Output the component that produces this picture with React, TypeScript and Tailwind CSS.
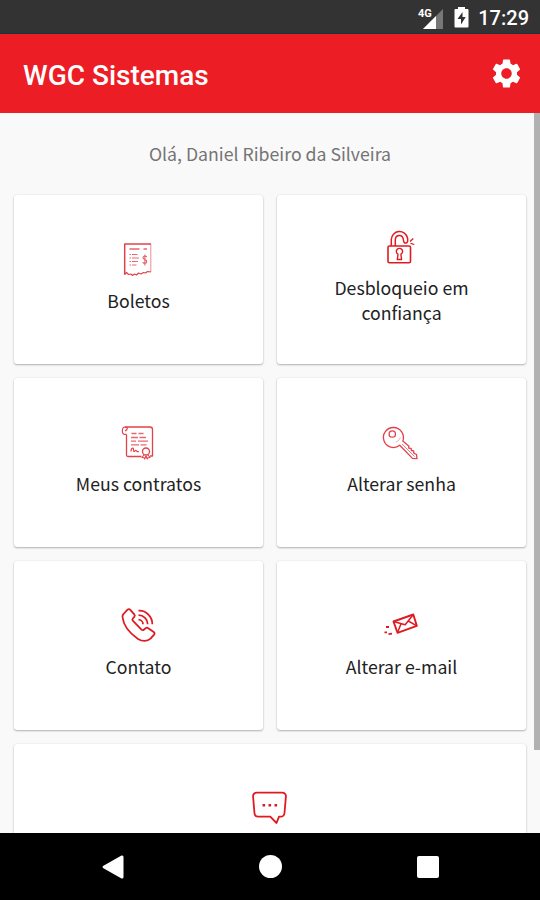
import type { ReactNode } from "react"
import { MdSettings } from "react-icons/md"

const Icon = ({ children, color = "text-[#e01a22]" }: { children: ReactNode, color?: string }) => (
  <svg
    width="36" height="36" viewBox="0.5 -0.5 36 36" fill="none" stroke="currentColor"
    strokeWidth="1.6" strokeLinejoin="round" className={`shrink-0 overflow-visible ${color}`}
  >
    {children}
  </svg>
)

const BillIcon = () => (
  <Icon color="text-[#e3414a]">
    <path d="M30.5 2.5H4.2V33" strokeWidth="1.5" />
    <path d="M30.3 2.5v28" strokeWidth="1" opacity=".6" />
    <path d="M4 33l2-2 2 2 2.5-.5 1.5 1.5 2-1.5 2 1 2-2 2.5 1 2.5-1.5 2 .5 2-1.5 3.5.5" strokeWidth="1.2" />
    <path d="M9 7.5h10M23 7.5h3.5" strokeWidth="1.3" opacity=".8" />
    <path d="M9 13h1.5M11.5 13h5.5M9 16.5h1.5M11.5 16.5h7M9 20h1.5M11.5 20h6M9 23.5h1.5M11.5 23.5h4.5" strokeWidth="1.2" opacity=".8" />
    <path d="M26.2 15.5c-.5-1.5-3.7-1.5-3.7.7s3.700 1.500 3.700 3.900-3.500 2.200-3.900.6M24.400 13v11" strokeWidth="1.1" opacity=".85" />
  </Icon>
)

const UnlockIcon = () => (
  <Icon>
    <rect x="4.5" y="17.5" width="22.5" height="16.7" rx="1.5" />
    <path d="M7.8 17.5V11a8.2 8.2 0 0 1 16.2-1.5c.5 2.5.2 4.5-1.3 5s-2.5-.7-2.7-2.5c-.3-3.500-1.500-5-4-5s-4.200 1.800-4.200 4.500v6" strokeWidth="1.5" />
    <path d="M14.5 25.7a3.1 3.1 0 1 1 2.9 0l.7 5.3h-4.3z" strokeWidth="1.4" />
    <path d="M26.5 13l3.300-3M27 14.8l3.800 1.200" strokeWidth="1.3" />
  </Icon>
)

const ContractIcon = () => (
  <Icon color="text-[#e3414a]">
    <path d="M6 10v20.5c0 1 .5 1.5 1.5 1.5H21M4.5 2.500h25c1.500 0 2.500 1 2.500 2.500v26.500h-2.500" strokeWidth="1.3" />
    <path d="M6 9.8H3.8C1.2 9.800 1 2.500 4.500 2.500S7 5.500 4.500 6.500" strokeWidth="1.2" />
    <path d="M11 9h5M18 9h5M10.5 13h7M19 13h6.500M10.500 16.700h5M17.500 16.700h10M10.500 20.300h8M20 20.300h6" strokeWidth="1.3" opacity=".8" />
    <path d="M10.5 27c0-2 1-3.500 2-3.500s0 3.500 1 3.500 1-1.500 2-1 .8 1.500 3 1.200" strokeWidth="1.2" />
    <circle cx="25.5" cy="27" r="3.5" strokeWidth="1.3" />
    <path d="M23.5 30.500l-2 2.500 2 .3.700 1.200 1.300-3M27.500 30.500l2 2.500-2 .3-.7 1.200-1.300-3" strokeWidth="1.1" />
  </Icon>
)

const KeyIcon = () => (
  <Icon color="text-[#e3414a]">
    <path d="M16.2 20.8A10 10 0 1 1 19.300 16.500l6.200 5.200-.3 2 2.500.1.200 2.200 2.300.3.100 2.400 2.700 1.300.5 4.200-4.500-.3z" strokeWidth="1.3" />
    <circle cx="8.8" cy="9.5" r="3.2" strokeWidth="1.3" />
    <path d="M18.5 19.5L31 32" strokeWidth="1" opacity=".7" />
    <path d="M16.8 13a6.500 6.500 0 0 1-4.500 4.700" strokeWidth=".8" opacity=".5" />
  </Icon>
)

const PhoneIcon = () => (
  <Icon>
    <path d="M2 9.5c-.2-1.300.2-2.200 1-3l3.800-4.200c1-.9 2.200-.9 3 0l4 4.500c.7.900.7 1.700 0 2.500L12.300 11c-.7.900-.6 1.500 0 2.200l8.700 8.900c.8.700 1.500.8 2.300.1l1.800-1.500c.9-.7 1.700-.7 2.600 0l5.500 3.800c1 .8 1.100 1.700.4 2.600L30 31.200C27 34.200 21.500 34 17.500 31.400 9.500 26 3 18.500 2 9.500z" strokeWidth="1.8" />
    <path d="M18 3.2c7.500-.5 13.800 5.800 13.800 13.500M18 7.700c5.200 0 9.200 4 9.200 9M18 12.200c2.500 0 4.500 2 4.500 4.500" strokeWidth="1.8" />
  </Icon>
)

const MailIcon = () => (
  <Icon>
    <path d="M10 14l19.800-7 3.500 11.300L14 25.300z" strokeWidth="1.9" />
    <path d="M10 14l11.700 3.200L29.800 7M14 25.300l3.500-9M33.300 18.300l-8.500-4.800" strokeWidth="1.5" />
    <path d="M2.5 19.5h3M1 24.8h2.500M5 26.700l3.500-.5" strokeWidth="1.8" />
  </Icon>
)

const ChatIcon = () => (
  <Icon>
    <path d="M5.5 2.2h25c2.700 0 4.200 1.500 3.900 4L33 22.500c-.3 2.500-1.500 3.700-3.800 3.700h-1.700L25 32.500l-6.200-6.300H6.500c-2 0-3.200-1-3.500-3.200L1.600 6.200c-.3-2.500 1.400-4 3.900-4z" strokeWidth="1.8" />
    <path d="M11 14.800h2.600M17 14.800h2.600M23 14.800h2.600" strokeWidth="2.4" />
  </Icon>
)

const cards = [
  { label: "Boletos", icon: <BillIcon /> },
  { label: "Desbloqueio em confiança", icon: <UnlockIcon /> },
  { label: "Meus contratos", icon: <ContractIcon /> },
  { label: "Alterar senha", icon: <KeyIcon /> },
  { label: "Contato", icon: <PhoneIcon /> },
  { label: "Alterar e-mail", icon: <MailIcon /> },
]

const cardClass = "flex h-[169px] flex-col items-center rounded-[3px] bg-white shadow-[0_1px_2px_rgba(0,0,0,0.28),0_0_2px_rgba(0,0,0,0.08)]"

const StatusBar = () => (
  <div className="flex h-[34px] shrink-0 items-center justify-end border-b border-[#1d3238] bg-[#333333] pr-[11px] text-white">
    <svg width="27" height="24" viewBox="0 0 27 24" className="mr-[10px]">
      <path d="M26 4v20H6z" fill="#777" />
      <path d="M19 11v13H6z" fill="#fff" />
      <text x="1" y="12" fill="#fff" fontFamily="Roboto" fontSize="11" fontWeight="700">4G</text>
    </svg>
    <svg width="15" height="22" viewBox="0 0 15 22" className="mr-[9px]">
      <path d="M4 3V1h7v2h2.5q1 0 1 1v16.5q0 1-1 1h-12q-1 0-1-1V4q0-1 1-1z" fill="#fff" />
      <path d="M8.5 6L3.5 13h3.500v5.500L11.700 11H8.500z" fill="#333" />
    </svg>
    <span className="pt-[3px] font-[Roboto,sans-serif] text-[20px] font-medium leading-6">17:29</span>
  </div>
)

const App = () => {
  return (
    <div className="flex h-[900px] w-[540px] flex-col overflow-hidden bg-[#f9f9f9] font-['Noto_Sans_CJK_SC',sans-serif]">
      <StatusBar />

      <header className="flex h-[79px] shrink-0 items-center justify-between bg-[#ec1d24] pl-[23px] pr-4 text-white">
        <h1 className="pt-[5px] font-[Roboto,sans-serif] text-[28px] font-medium leading-8">WGC Sistemas</h1>
        <MdSettings size={35} />
      </header>

      <main className="flex min-h-0 flex-1 overflow-hidden">
        <div className="w-[526px] shrink-0 pl-[14px]">
          <p className="flex h-[82px] items-center justify-center pb-[2px] text-[17.7px] leading-6 text-[#747474]">
            Olá, Daniel Ribeiro da Silveira
          </p>
          <div className="grid grid-cols-2 gap-[14px]">
            {cards.map((card) => (
              <div key={card.label} className={`justify-center pb-[6px] ${cardClass}`}>
                {card.icon}
                <p className="mt-[11px] w-[160px] text-center text-[17.7px] leading-[25px] text-[#222222]">{card.label}</p>
              </div>
            ))}
            <div className={`col-span-2 pt-[46px] ${cardClass}`}>
              <ChatIcon />
            </div>
          </div>
        </div>
        <div className="ml-auto h-[637px] w-[6px] bg-[#b1b1b1]" />
      </main>

      <nav className="flex h-[67px] shrink-0 items-center justify-between bg-black pl-[102px] pr-[101px]">
        <svg width="22" height="24" viewBox="0 0 22 24" fill="#fff">
          <path d="M1 11L19.5.5Q21.5 0 21.5 2v20q0 2-2 1.5L1 13q-1-1 0-2z" />
        </svg>
        <span className="size-[23px] rounded-full bg-white" />
        <span className="size-[22px] rounded-[2px] bg-white" />
      </nav>
    </div>
  )
}

export default App
